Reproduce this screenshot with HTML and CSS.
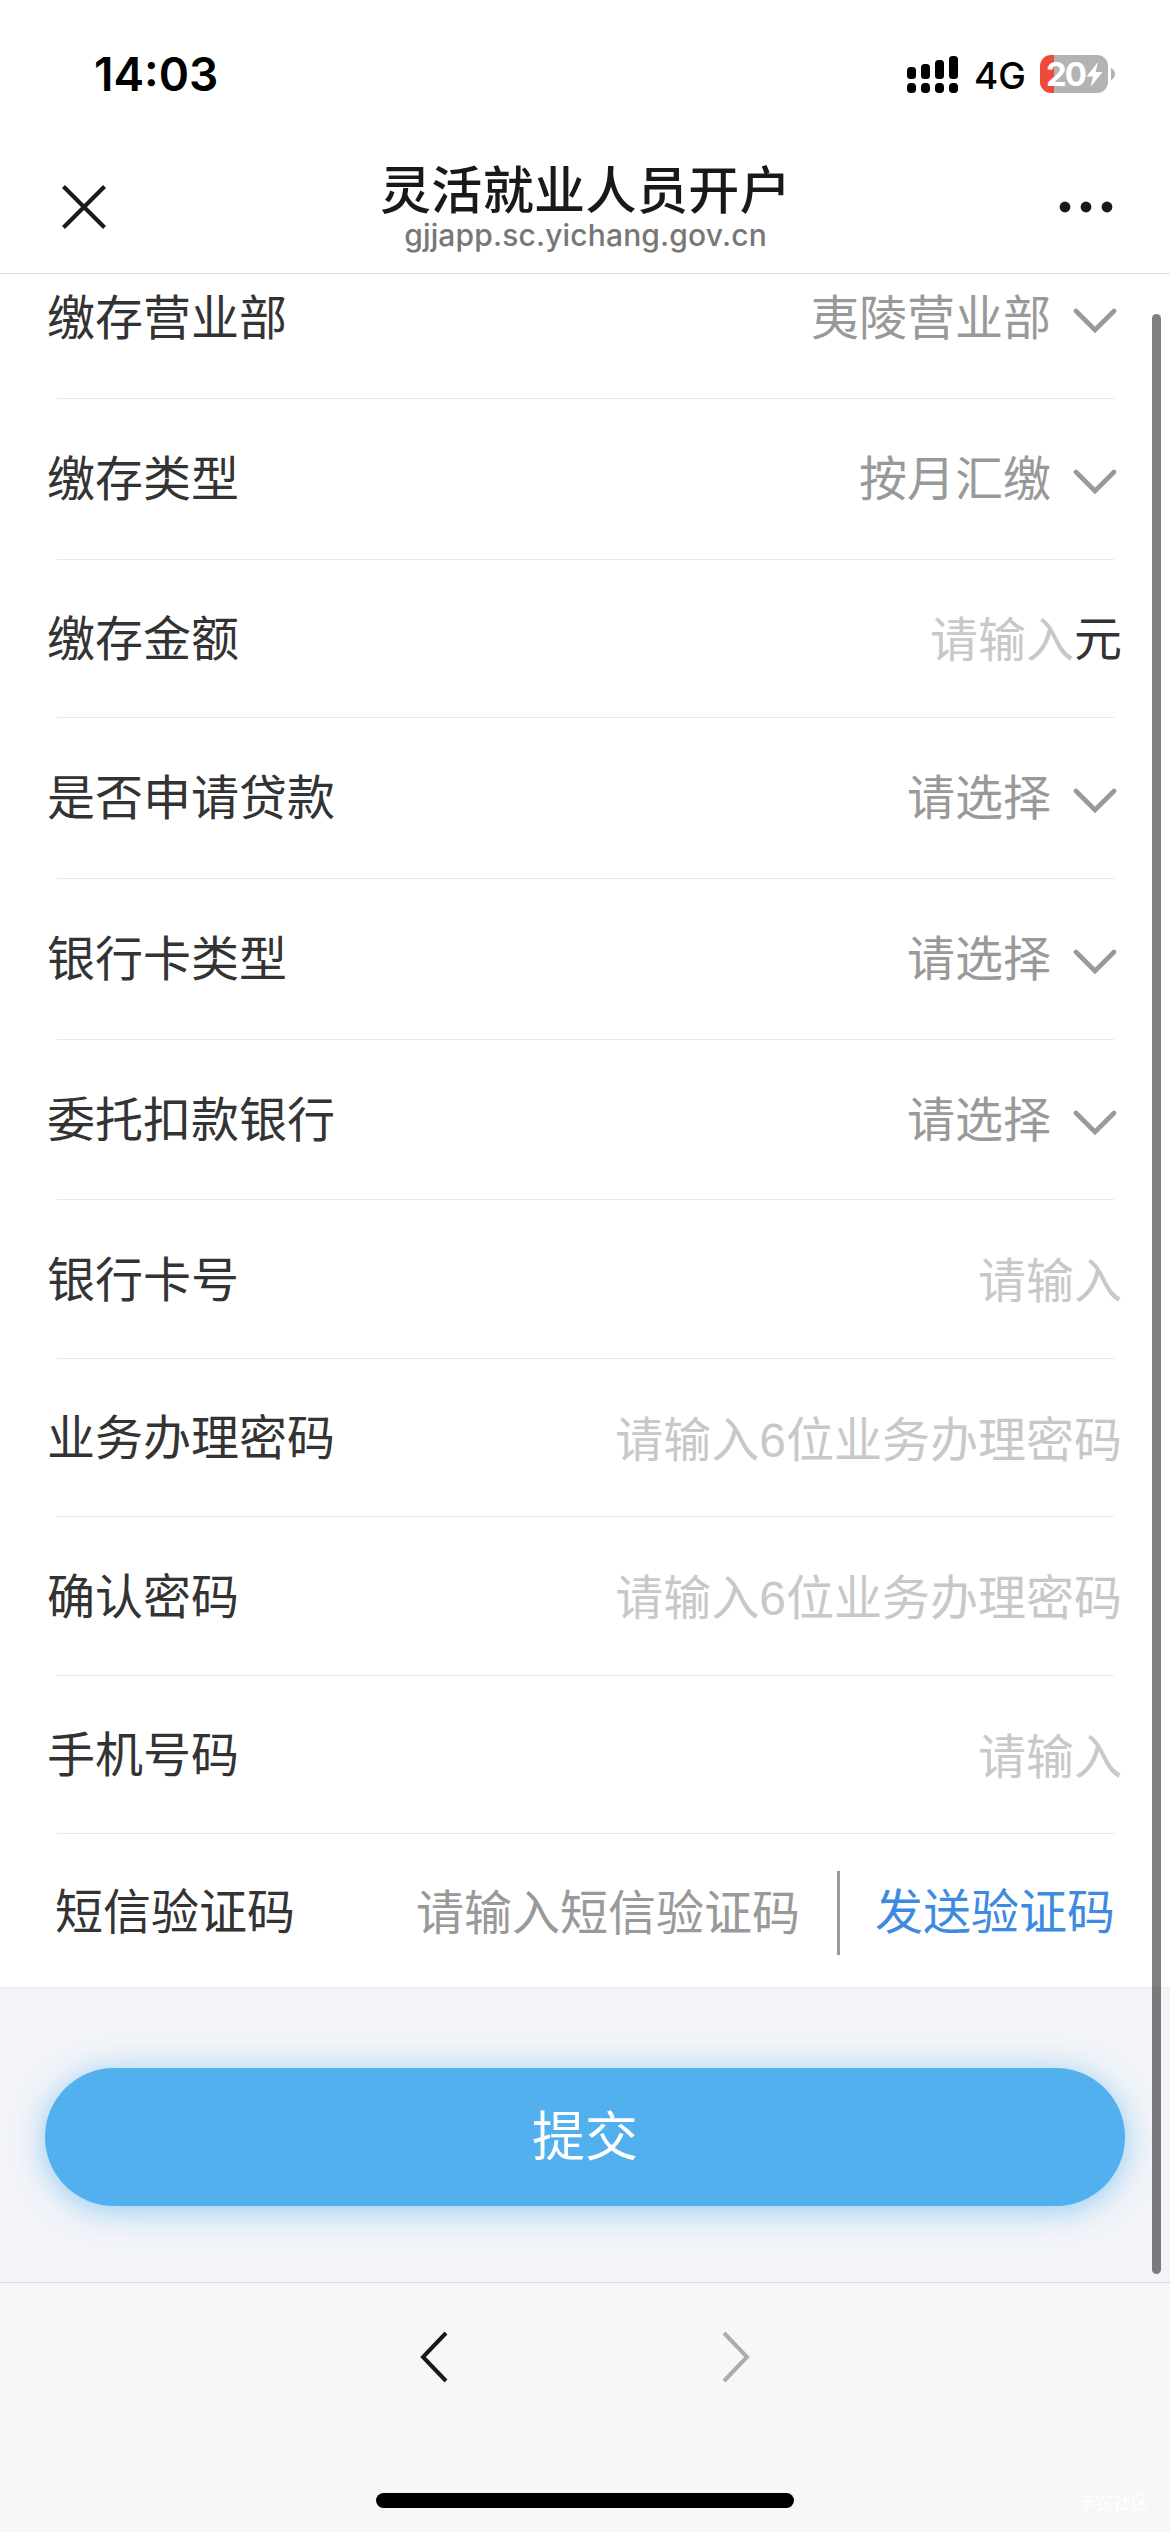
FILE: index.html
```html
<!DOCTYPE html>
<html lang="zh-CN">
<head>
<meta charset="utf-8">
<title>灵活就业人员开户</title>
<link rel="stylesheet" href="styles.css">
</head>
<body>
<svg class="defs" width="0" height="0" aria-hidden="true">
  <symbol id="chevron" viewBox="0 0 44 26"><path d="M3 3 L22 22 L41 3" fill="none" stroke="#999" stroke-width="4.6" stroke-linecap="round"/></symbol>
</svg>
<div class="screen">
  <header class="status">
    <span class="clock">14:03</span>
    <div class="indicators">
      <svg class="signal" width="51" height="38" viewBox="0 0 51 38">
        <rect x="0" y="11" width="9" height="12" rx="3.5"/><rect x="14" y="8" width="9" height="15" rx="3.5"/><rect x="28" y="4" width="9" height="19" rx="3.5"/><rect x="42" y="0" width="9" height="23" rx="3.5"/>
        <rect x="0" y="27" width="9" height="10" rx="3.8"/><rect x="14" y="27" width="9" height="10" rx="3.8"/><rect x="28" y="27" width="9" height="10" rx="3.8"/><rect x="42" y="27" width="9" height="10" rx="3.8"/>
      </svg>
      <span class="network">4G</span>
      <div class="battery">
        <div class="battery-body">
          <span class="battery-level">20</span>
          <svg width="17" height="25" viewBox="0 0 17 25"><path d="M12 0 L0.500 14.500 H7 L4.500 25 L16.500 10 H9.700 Z" fill="#fff"/></svg>
        </div>
        <svg width="4" height="12" viewBox="0 0 4 12"><path d="M0 0 Q4 2 4 6 Q4 10 0 12 Z" fill="#b3b3b3"/></svg>
      </div>
    </div>
  </header>

  <nav class="titlebar">
    <svg width="44" height="44" viewBox="0 0 44 44"><path d="M1.500 1.500 L42.500 42.500 M42.500 1.500 L1.500 42.500" stroke="#191919" stroke-width="4.200"/></svg>
    <div class="titles">
      <h1>灵活就业人员开户</h1>
      <p>gjjapp.sc.yichang.gov.cn</p>
    </div>
    <svg width="54" height="12" viewBox="0 0 54 12" fill="#191919"><circle cx="6" cy="6" r="5.400"/><circle cx="27" cy="6" r="5.400"/><circle cx="48" cy="6" r="5.400"/></svg>
  </nav>

  <main class="page">
    <form class="form">
      <div class="row select"><span>缴存营业部</span><span class="value">夷陵营业部</span><svg class="chevron"><use href="#chevron"/></svg></div>
      <hr>
      <div class="row select"><span>缴存类型</span><span class="value">按月汇缴</span><svg class="chevron"><use href="#chevron"/></svg></div>
      <hr>
      <div class="row"><span>缴存金额</span><span class="hint">请输入</span><span>元</span></div>
      <hr>
      <div class="row select"><span>是否申请贷款</span><span class="value">请选择</span><svg class="chevron"><use href="#chevron"/></svg></div>
      <hr>
      <div class="row select"><span>银行卡类型</span><span class="value">请选择</span><svg class="chevron"><use href="#chevron"/></svg></div>
      <hr>
      <div class="row select"><span>委托扣款银行</span><span class="value">请选择</span><svg class="chevron"><use href="#chevron"/></svg></div>
      <hr>
      <div class="row"><span>银行卡号</span><span class="hint">请输入</span></div>
      <hr>
      <div class="row"><span>业务办理密码</span><span class="hint">请输入6位业务办理密码</span></div>
      <hr>
      <div class="row"><span>确认密码</span><span class="hint">请输入6位业务办理密码</span></div>
      <hr>
      <div class="row"><span>手机号码</span><span class="hint">请输入</span></div>
      <hr>
      <div class="row sms"><span>短信验证码</span><span class="code-hint">请输入短信验证码</span><span class="send">发送验证码</span></div>
    </form>
    <div class="actions"><div class="submit">提交</div></div>
    <div class="scrollbar"></div>
  </main>

  <footer class="toolbar">
    <div class="arrows">
      <svg width="28" height="52" viewBox="0 0 28 52"><path d="M26 2 L3 26 L26 50" fill="none" stroke="#191919" stroke-width="4"/></svg>
      <svg width="28" height="52" viewBox="0 0 28 52"><path d="M2 2 L25 26 L2 50" fill="none" stroke="#acacac" stroke-width="4"/></svg>
    </div>
    <div class="home"></div>
    <span class="watermark">卡农社区</span>
  </footer>
</div>
</body>
</html>
```
FILE: styles.css
```css
* { box-sizing: border-box; }
body {
  margin: 0;
  background: #fff;
  color: #333;
  font-family: "Liberation Sans", "Noto Sans CJK SC", sans-serif;
}
.defs { position: absolute; }
.screen {
  width: 1170px;
  height: 2532px;
  display: flex;
  flex-direction: column;
  overflow: hidden;
}

.status {
  height: 141px;
  padding: 0 55px 0 94px;
  display: flex;
  justify-content: space-between;
  color: #000;
  font-family: Inter, "Liberation Sans", sans-serif;
}
.clock {
  padding-top: 46px;
  font-size: 46px;
  line-height: 56px;
  font-weight: 600;
}
.indicators { display: flex; align-items: flex-start; padding-top: 55px; }
.signal { margin: 1px 15px 0 0; }
.network {
  width: 67px;
  padding: 1px 0 0 1px;
  font-size: 37px;
  line-height: 40px;
  font-weight: 500;
}
.battery { display: flex; align-items: center; gap: 3px; }
.battery-body {
  width: 68px;
  height: 38px;
  padding-left: 6px;
  border-radius: 11px;
  background: linear-gradient(90deg, #ee4b3b 14px, #b3b3b3 14px);
  display: flex;
  align-items: center;
  gap: 1px;
}
.battery-level {
  width: 39px;
  color: #fff;
  font-size: 33px;
  line-height: 38px;
  font-weight: 700;
  letter-spacing: -2px;
}

.titlebar {
  height: 133px;
  padding: 0 57px 0 62px;
  border-bottom: 1px solid #dcdcdc;
  display: flex;
  align-items: center;
  justify-content: space-between;
}
.titles { padding-left: 6px; text-align: center; white-space: nowrap; }
.titles h1 {
  margin: 0;
  padding-top: 3px;
  color: #191919;
  font-size: 51px;
  line-height: 56px;
  font-weight: 500;
  letter-spacing: .4px;
}
.titles p {
  margin: -3px 0 0;
  color: #777;
  font-family: Inter, sans-serif;
  font-size: 30px;
  line-height: 36px;
  font-weight: 500;
  letter-spacing: .15px;
}

.page {
  position: relative;
  height: 2008px;
  overflow: hidden;
  background: #f2f4f8;
}
.form { margin-top: -36px; background: #fff; border-bottom: 1px solid #ececee; }
.form hr {
  height: 1px;
  margin: 0 56px 0 57px;
  border: 0;
  background: #e8e8e8;
}
.row {
  height: 157.5px;
  padding: 3px 48px 0 47px;
  display: flex;
  align-items: center;
  font-size: 48px;
  line-height: 70px;
  white-space: nowrap;
}
.select { height: 159.8px; padding-right: 53px; }
.value { margin-left: auto; color: #999; }
.chevron { width: 44px; height: 26px; margin: 4px 0 0 22px; }
.hint { margin-left: auto; padding-top: 3px; color: #c8c8ca; }
.sms { height: 153px; padding: 4px 55px 0; }
.code-hint { margin-left: auto; padding-top: 3px; color: #999; }
.send {
  height: 84px;
  margin-left: 37px;
  padding-left: 35px;
  border-left: 3px solid #999;
  color: #3d8ae0;
  line-height: 84px;
}
.actions { padding: 80px 45px; }
.submit {
  height: 138px;
  border-radius: 69px;
  background: #52b0ef;
  box-shadow: 0 4px 30px rgba(82, 176, 239, .6);
  color: #fff;
  font-size: 53px;
  line-height: 139px;
  text-align: center;
}
.scrollbar {
  position: absolute;
  top: 40px;
  right: 9px;
  width: 9px;
  height: 1960px;
  border-radius: 5px;
  background: rgba(0, 0, 0, .5);
}

.toolbar {
  position: relative;
  flex: 1;
  border-top: 1px solid #d9dbdf;
  background: #f7f7f7;
  display: flex;
  flex-direction: column;
  align-items: center;
}
.arrows { width: 330px; padding-top: 48px; display: flex; justify-content: space-between; }
.home {
  width: 418px;
  height: 15px;
  margin-top: 110px;
  border-radius: 8px;
  background: #000;
}
.watermark {
  position: absolute;
  right: 21px;
  bottom: 16px;
  color: #fff;
  font-size: 18px;
  line-height: 26px;
}
```
